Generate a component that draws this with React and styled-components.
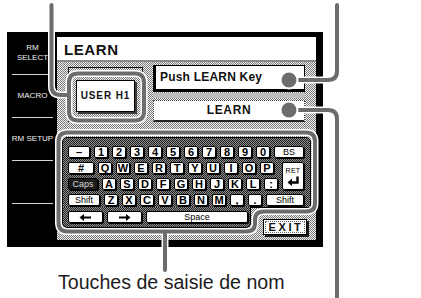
import React from "react";
import styled, { createGlobalStyle } from "styled-components";

const GlobalStyle = createGlobalStyle`
  html, body { margin: 0; padding: 0; background: #fff; }
  body { font-family: "Liberation Sans", Arial, sans-serif; }
`;

const lightDither = `
  background-color: #f4f4f4;
  background-image: conic-gradient(#777 25%, transparent 0 50%, #777 0 75%, transparent 0);
  background-size: 2px 2px;
`;

const darkDither = `
  background-color: #8e8e8e;
  background-image: conic-gradient(#222 25%, transparent 0 50%, #222 0 75%, transparent 0);
  background-size: 2px 2px;
`;

const Page = styled.div`
  position: relative;
  width: 421px;
  height: 298px;
  overflow: hidden;
  background: #fff;
  padding: 32px 0 0 7px;
  box-sizing: border-box;
`;

const Screen = styled.div`
  display: flex;
  width: 316px;
  height: 215px;
  background: #000;
`;

const Sidebar = styled.div`
  width: 50px;
  display: flex;
  flex-direction: column;
  overflow: hidden;
`;

const SideItem = styled.div`
  height: 43px;
  box-sizing: border-box;
  margin: 0 4px 0 5px;
  border-bottom: 1px solid ${(p) => (p.$line ? "#d6d6d6" : "transparent")};
  display: flex;
  align-items: center;
  justify-content: center;
  text-align: center;
  color: #f0f0f0;
  font-size: 8px;
  line-height: 10px;
  white-space: nowrap;
`;

const Main = styled.div`
  flex: 1;
  display: flex;
  flex-direction: column;
  border-top: 5px solid #000;
  border-right: 7px solid #000;
  border-bottom: 7px solid #000;
`;

const Title = styled.div`
  height: 23px;
  box-sizing: border-box;
  padding: 2px 0 0 7px;
  background: #fff;
  font: bold 15px/21px "Liberation Sans", sans-serif;
  letter-spacing: 0.6px;
  color: #111;
`;

const Body = styled.div`
  flex: 1;
  border-top: 2px solid #8a8a8a;
  ${lightDither}
  padding: 3px 0 0 5px;
`;

const TopSection = styled.div`
  display: flex;
  align-items: flex-start;
  gap: 10px;
  margin-left: 6px;
`;

const UserFrame = styled.div`
  width: 75px;
  height: 55px;
  margin-top: 2px;
  box-sizing: border-box;
  border: 1px solid #111;
  display: flex;
  align-items: center;
  justify-content: center;
`;

const UserButton = styled.div`
  width: 59px;
  height: 32px;
  margin-top: 3px;
  box-sizing: border-box;
  border: 1px solid #000;
  background: #fff;
  box-shadow: 2px 2px 0 #3a3a3a;
  display: flex;
  align-items: center;
  justify-content: center;
  font: bold 10px/1 "Liberation Sans", sans-serif;
  letter-spacing: 0.9px;
  color: #111;
`;

const Fields = styled.div`
  width: 152px;
  display: flex;
  flex-direction: column;
`;

const MessageField = styled.div`
  height: 27px;
  box-sizing: border-box;
  border: 1px solid #000;
  border-left-width: 3px;
  border-bottom-width: 3px;
  background: #fff;
  padding-left: 4px;
  font: bold 12px/23px "Liberation Sans", sans-serif;
  letter-spacing: 0.2px;
  color: #111;
`;

const Band = styled.div`
  height: 5px;
  margin: 1px 0 2px;
  background: #bdbdbd;
`;

const ActionField = styled.div`
  height: 22px;
  box-sizing: border-box;
  border: 1px dotted #444;
  border-bottom: 2px solid #222;
  background: #fff;
  text-align: center;
  font: bold 12px/19px "Liberation Sans", sans-serif;
  letter-spacing: 0.6px;
  color: #111;
`;

const KeyboardArea = styled.div`
  width: 249px;
  margin-top: 15px;
  display: flex;
  flex-direction: column;
`;

const PanelMain = styled.div`
  border: 1px solid #000;
  border-radius: 5px 5px 0 0;
  padding: 8px 6px 1px 5px;
  ${darkDither}
  display: flex;
  flex-direction: column;
  gap: 4px;
`;

const KeyRow = styled.div`
  display: flex;
  gap: 4px;
`;

const KeyCol = styled.div`
  width: ${(p) => p.$w}px;
  display: flex;
  flex-direction: column;
  gap: 4px;
`;

const BottomRow = styled.div`
  display: flex;
  align-items: flex-start;
  margin-top: -1px;
`;

const PanelFoot = styled.div`
  width: 189px;
  box-sizing: border-box;
  border: 1px solid #000;
  border-top: none;
  border-radius: 0 0 5px 5px;
  padding: 4px 2px 4px 5px;
  ${darkDither}
`;

const ExitCell = styled.div`
  padding: 12px 0 0 12px;
`;

const ExitButton = styled.div`
  width: 44px;
  height: 16px;
  box-sizing: border-box;
  border: 1px solid #000;
  background: #fff;
  box-shadow: 2px 2px 0 #1a1a1a;
  outline: 1px dotted #666;
  outline-offset: -3px;
  display: flex;
  align-items: center;
  justify-content: center;
  padding-left: 2px;
  font: bold 11px/1 "Liberation Sans", sans-serif;
  letter-spacing: 2.6px;
  color: #111;
`;

const Key = styled.div`
  width: ${(p) => p.$w || 14}px;
  height: ${(p) => p.$h || 12}px;
  flex: ${(p) => (p.$grow ? "1" : "none")};
  box-sizing: border-box;
  border: 1px solid #000;
  border-radius: 2px;
  background: ${(p) => (p.$dark ? "#1c1c1c" : "#fff")};
  color: ${(p) => (p.$dark ? "#d4d4d4" : "#000")};
  box-shadow: 1px 1px 0 #000;
  display: flex;
  flex-direction: column;
  align-items: center;
  justify-content: center;
  gap: 2px;
  font-family: "Liberation Sans", sans-serif;
  font-size: ${(p) => (p.$thin ? 9 : 11)}px;
  font-weight: ${(p) => (p.$thin ? 400 : 700)};
  line-height: 1;
`;

const SmallLabel = styled.span`
  font-size: 7px;
  font-weight: 400;
  letter-spacing: 0.3px;
`;

const Caption = styled.div`
  margin: 26px 0 0 51px;
  font: 19.6px/19px "Liberation Sans", Arial, sans-serif;
  color: #1c1c1c;
  white-space: nowrap;
`;

const Overlay = styled.svg`
  position: absolute;
  left: 0;
  top: 0;
  pointer-events: none;
`;

const LeftArrow = () => (
  <svg width="13" height="7" viewBox="0 0 13 7">
    <path d="M4 3.5 H12" stroke="#000" strokeWidth="2" />
    <path d="M0.5 3.5 L5 0 V7 Z" fill="#000" />
  </svg>
);

const RightArrow = () => (
  <svg width="13" height="7" viewBox="0 0 13 7">
    <path d="M1 3.5 H9" stroke="#000" strokeWidth="2" />
    <path d="M12.5 3.5 L8 0 V7 Z" fill="#000" />
  </svg>
);

const EnterArrow = () => (
  <svg width="13" height="10" viewBox="0 0 13 10">
    <path d="M10.5 0.5 V6.5 H4" stroke="#000" strokeWidth="2.4" fill="none" />
    <path d="M0.5 6.5 L5 2.5 V10 Z" fill="#000" />
  </svg>
);

const row1 = ["1", "2", "3", "4", "5", "6", "7", "8", "9", "0"];
const row2 = ["Q", "W", "E", "R", "T", "Y", "U", "I", "O", "P"];
const row3 = ["A", "S", "D", "F", "G", "H", "J", "K", "L", ":"];
const row4 = ["Z", "X", "C", "V", "B", "N", "M", ",", "."];

const outlinePaths = [
  "M51.5 5 V86 Q51.5 95 60.5 95 H69",
  "M78 73.5 H135 Q144 73.5 144 82.5 V111.5 Q144 120.5 135 120.5 H78 Q69 120.5 69 111.5 V82.5 Q69 73.5 78 73.5 Z",
  "M289 80 H328 Q337 80 337 71 V5",
  "M289 110 H328 Q337 110 337 119 V300",
  "M58.5 141.5 Q58.5 132.5 67.5 132.5 H306 Q315 132.5 315 141.5 V203 Q315 211.5 306.5 211.5 H263.5 Q255 211.5 255 220 V223 Q255 231.5 246.5 231.5 H67.5 Q58.5 231.5 58.5 222.5 Z",
  "M165 233.5 V270",
];

export default function App() {
  return (
    <>
      <GlobalStyle />
      <Page>
        <Screen>
          <Sidebar>
            <SideItem $line>
              RM
              <br />
              SELECT
            </SideItem>
            <SideItem $line>MACRO</SideItem>
            <SideItem $line>RM SETUP</SideItem>
            <SideItem $line />
            <SideItem />
          </Sidebar>
          <Main>
            <Title>LEARN</Title>
            <Body>
              <TopSection>
                <UserFrame>
                  <UserButton>USER H1</UserButton>
                </UserFrame>
                <Fields>
                  <MessageField>Push LEARN Key</MessageField>
                  <Band />
                  <ActionField>LEARN</ActionField>
                </Fields>
              </TopSection>
              <KeyboardArea>
                <PanelMain>
                  <KeyRow>
                    <Key $w={22}>–</Key>
                    {row1.map((k) => (
                      <Key key={k}>{k}</Key>
                    ))}
                    <Key $grow $thin>
                      BS
                    </Key>
                  </KeyRow>
                  <KeyRow>
                    <KeyCol $w={210}>
                      <KeyRow>
                        <Key $w={26}>#</Key>
                        {row2.map((k) => (
                          <Key key={k}>{k}</Key>
                        ))}
                      </KeyRow>
                      <KeyRow>
                        <Key $w={30} $dark $thin>
                          Caps
                        </Key>
                        {row3.map((k) => (
                          <Key key={k}>{k}</Key>
                        ))}
                      </KeyRow>
                    </KeyCol>
                    <Key $grow $h={28}>
                      <SmallLabel>RET</SmallLabel>
                      <EnterArrow />
                    </Key>
                  </KeyRow>
                  <KeyRow>
                    <Key $w={32} $thin>
                      Shift
                    </Key>
                    {row4.map((k) => (
                      <Key key={k}>{k}</Key>
                    ))}
                    <Key $grow $thin>
                      Shift
                    </Key>
                  </KeyRow>
                </PanelMain>
                <BottomRow>
                  <PanelFoot>
                    <KeyRow>
                      <Key $w={35}>
                        <LeftArrow />
                      </Key>
                      <Key $w={35}>
                        <RightArrow />
                      </Key>
                      <Key $w={102} $thin>
                        Space
                      </Key>
                    </KeyRow>
                  </PanelFoot>
                  <ExitCell>
                    <ExitButton>EXIT</ExitButton>
                  </ExitCell>
                </BottomRow>
              </KeyboardArea>
            </Body>
          </Main>
        </Screen>
        <Caption>Touches de saisie de nom</Caption>
        <Overlay width="421" height="298" viewBox="0 0 421 298">
          <g fill="none" stroke="#fff" strokeWidth="7" strokeLinecap="round" strokeLinejoin="round">
            {outlinePaths.map((d, i) => (
              <path key={i} d={d} />
            ))}
          </g>
          <g fill="none" stroke="#6c6c6c" strokeWidth="4" strokeLinecap="round" strokeLinejoin="round">
            {outlinePaths.map((d, i) => (
              <path key={i} d={d} />
            ))}
          </g>
          <circle cx="289" cy="80" r="9.5" fill="#fff" />
          <circle cx="289" cy="110" r="9.5" fill="#fff" />
          <circle cx="289" cy="80" r="7.5" fill="#6c6c6c" />
          <circle cx="289" cy="110" r="7.5" fill="#6c6c6c" />
        </Overlay>
      </Page>
    </>
  );
}
